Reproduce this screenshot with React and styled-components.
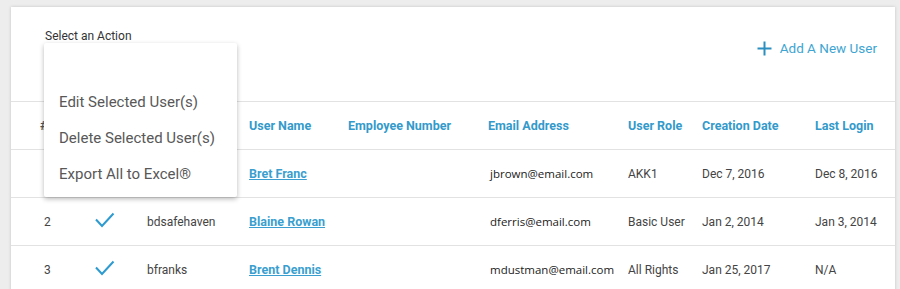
import React from "react";
import styled, { createGlobalStyle } from "styled-components";

const Global = createGlobalStyle`
  html, body { margin: 0; padding: 0; overflow: hidden; background: #ededed; }
  body { font-family: Roboto, "Liberation Sans", Arial, sans-serif; }
  * { box-sizing: border-box; }
`;

const Page = styled.div`
  padding: 7px 5px 0 11px;
`;

const Card = styled.div`
  background: #fff;
  box-shadow: 0 0 3px rgba(0, 0, 0, 0.18);
  min-height: 300px;
`;

const Header = styled.div`
  height: 95px;
  display: flex;
  justify-content: space-between;
  align-items: flex-start;
  padding: 22px 18px 0 34px;
  border-bottom: 1px solid #e2e2e2;
`;

const ActionSelect = styled.div`
  position: relative;
`;

const ActionLabel = styled.div`
  font-size: 12px;
  line-height: 14px;
  color: #333;
`;

const Menu = styled.ul`
  position: absolute;
  top: 100%;
  left: -1px;
  width: 193px;
  margin: 0;
  padding: 41px 0 5px;
  list-style: none;
  background: #fff;
  box-shadow: 0 2px 5px rgba(0, 0, 0, 0.28);
  border-radius: 2px;
  z-index: 5;
`;

const MenuItem = styled.li`
  height: 36px;
  display: flex;
  align-items: center;
  padding-left: 15px;
  font-size: 15px;
  color: #585858;
  white-space: nowrap;
`;

const AddButton = styled.button`
  display: flex;
  align-items: center;
  gap: 8px;
  margin-top: 11px;
  padding: 0;
  border: 0;
  background: none;
  font-family: Roboto, "Liberation Sans", Arial, sans-serif;
  font-size: 13.5px;
  color: #3ea5d2;
  cursor: pointer;
`;

const cols = "55px 50px 104px 99px 140px 140px 74px 113px 1fr";

const Row = styled.div`
  display: grid;
  grid-template-columns: ${cols};
  align-items: center;
  height: 48px;
  padding-left: 29px;
  border-bottom: 1px solid #e2e2e2;
`;

const HeadCell = styled.div`
  font-size: 12.5px;
  font-weight: 700;
  color: ${(p) => (p.$muted ? "#555" : "#339acb")};
  white-space: nowrap;
`;

const Cell = styled.div`
  font-size: 12px;
  color: #444;
  white-space: nowrap;
  padding-left: ${(p) => p.$indent || 0}px;
  font-family: ${(p) =>
    p.$alt ? `"Open Sans", "DejaVu Sans", sans-serif` : "inherit"};
  ${(p) => p.$alt && "font-size: 11.5px; color: #222;"}
`;

const NameLink = styled.a`
  font-size: 12.5px;
  font-weight: 700;
  color: #3a9fcf;
  text-decoration: underline;
  white-space: nowrap;
`;

const Plus = () => (
  <svg width="15" height="15" viewBox="0 0 15 15">
    <path d="M7.5 0.5v14M0.5 7.5h14" stroke="#2b8fc0" strokeWidth="2" fill="none" />
  </svg>
);

const Check = () => (
  <svg width="20" height="16" viewBox="0 0 20 16">
    <path d="M1 7.5l6 6.5L18.5 1.5" stroke="#2d9ad0" strokeWidth="2" fill="none" />
  </svg>
);

const users = [
  { n: 1, login: "", name: "Bret Franc", email: "jbrown@email.com", role: "AKK1", created: "Dec 7, 2016", last: "Dec 8, 2016" },
  { n: 2, login: "bdsafehaven", name: "Blaine Rowan", email: "dferris@email.com", role: "Basic User", created: "Jan 2, 2014", last: "Jan 3, 2014" },
  { n: 3, login: "bfranks", name: "Brent Dennis", email: "mdustman@email.com", role: "All Rights", created: "Jan 25, 2017", last: "N/A" },
];

export default function App() {
  return (
    <>
      <Global />
      <Page>
        <Card>
          <Header>
            <ActionSelect>
              <ActionLabel>Select an Action</ActionLabel>
              <Menu>
                <MenuItem>Edit Selected User(s)</MenuItem>
                <MenuItem>Delete Selected User(s)</MenuItem>
                <MenuItem>Export All to Excel®</MenuItem>
              </Menu>
            </ActionSelect>
            <AddButton>
              <Plus />
              Add A New User
            </AddButton>
          </Header>
          <Row>
            <HeadCell $muted>#</HeadCell>
            <HeadCell />
            <HeadCell />
            <HeadCell>User Name</HeadCell>
            <HeadCell>Employee Number</HeadCell>
            <HeadCell>Email Address</HeadCell>
            <HeadCell>User Role</HeadCell>
            <HeadCell>Creation Date</HeadCell>
            <HeadCell>Last Login</HeadCell>
          </Row>
          {users.map((u) => (
            <Row key={u.n}>
              <Cell $indent={4}>{u.n}</Cell>
              <Cell><Check /></Cell>
              <Cell $indent={2}>{u.login}</Cell>
              <Cell><NameLink href="#">{u.name}</NameLink></Cell>
              <Cell />
              <Cell $alt $indent={2}>{u.email}</Cell>
              <Cell>{u.role}</Cell>
              <Cell>{u.created}</Cell>
              <Cell>{u.last}</Cell>
            </Row>
          ))}
        </Card>
      </Page>
    </>
  );
}
